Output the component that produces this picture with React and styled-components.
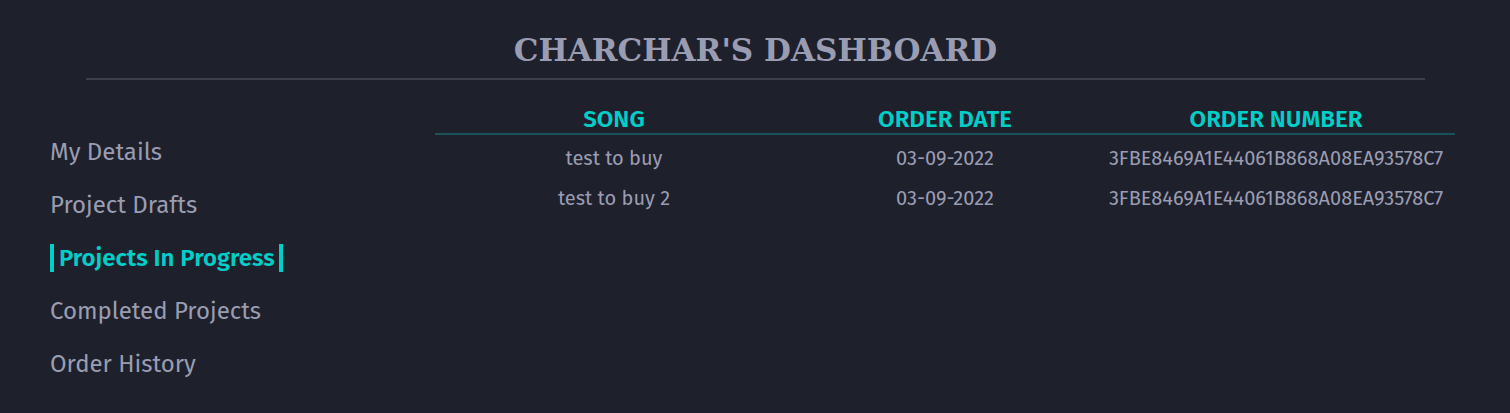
import React from "react";
import styled, { createGlobalStyle } from "styled-components";

const GlobalStyle = createGlobalStyle`
  html, body {
    margin: 0;
    padding: 0;
    background: #1e202c;
  }
  body {
    font-family: "Fira Sans", "Noto Sans", "Open Sans", sans-serif;
  }
`;

const menu = [
  "My Details",
  "Project Drafts",
  "Projects In Progress",
  "Completed Projects",
  "Order History",
];

const orders = [
  { song: "test to buy", date: "03-09-2022", number: "3FBE8469A1E44061B868A08EA93578C7" },
  { song: "test to buy 2", date: "03-09-2022", number: "3FBE8469A1E44061B868A08EA93578C7" },
];

const App = () => {
  return (
    <>
      <GlobalStyle />
      <Page>
        <Header>
          <Title>CHARCHAR'S DASHBOARD</Title>
        </Header>
        <Body>
          <Sidebar>
            {menu.map((item) => (
              <MenuItem key={item}>
                <MenuLabel active={item === "Projects In Progress"}>{item}</MenuLabel>
              </MenuItem>
            ))}
          </Sidebar>
          <Table>
            <HeadRow>
              <HeadCell>Song</HeadCell>
              <HeadCell>Order Date</HeadCell>
              <HeadCell>Order Number</HeadCell>
            </HeadRow>
            {orders.map((o) => (
              <Row key={o.song}>
                <Cell>{o.song}</Cell>
                <Cell>{o.date}</Cell>
                <Cell>{o.number}</Cell>
              </Row>
            ))}
          </Table>
        </Body>
      </Page>
    </>
  );
};

export default App;

const Page = styled.div`
  min-height: 413px;
  background: #1e202c;
  padding-top: 30px;
  box-sizing: border-box;
`;
const Header = styled.header`
  margin: 0 85px 0 86px;
  border-bottom: 2px solid #3d404b;
  text-align: center;
  padding-bottom: 8px;
`;
const Title = styled.h1`
  margin: 0;
  font-family: "DejaVu Serif", serif;
  font-weight: bold;
  font-size: 31px;
  line-height: 40px;
  color: #9a9db2;
`;
const Body = styled.div`
  display: flex;
  padding: 25px 55px 0 50px;
`;
const Sidebar = styled.ul`
  list-style: none;
  margin: 33px 0 0;
  padding: 0;
  width: 385px;
  flex-shrink: 0;
  display: flex;
  flex-direction: column;
  gap: 25px;
`;
const MenuItem = styled.li`
  display: flex;
`;
const MenuLabel = styled.span`
  font-size: 24px;
  line-height: 28px;
  color: ${(p) => (p.active ? "#00cec8" : "#9a9db2")};
  font-weight: ${(p) => (p.active ? 600 : 400)};
  border-left: 4px solid ${(p) => (p.active ? "#00cec8" : "transparent")};
  border-right: 4px solid ${(p) => (p.active ? "#00cec8" : "transparent")};
  padding: 0 4px 0 5px;
  margin-left: ${(p) => (p.active ? "0" : "-9px")};
`;
const Table = styled.div`
  flex: 1;
  display: grid;
  grid-template-columns: 358fr 304fr 358fr;
  align-content: start;
`;
const HeadRow = styled.div`
  display: contents;
`;
const HeadCell = styled.div`
  text-align: center;
  text-transform: uppercase;
  font-weight: 600;
  font-size: 24px;
  line-height: 28px;
  color: #00cec8;
  border-bottom: 2px solid #1a5259;
`;
const Row = styled.div`
  display: contents;
`;
const Cell = styled.div`
  text-align: center;
  font-size: 20px;
  line-height: 24px;
  color: #9a9db2;
  padding: 11px 0 5px;
`;
